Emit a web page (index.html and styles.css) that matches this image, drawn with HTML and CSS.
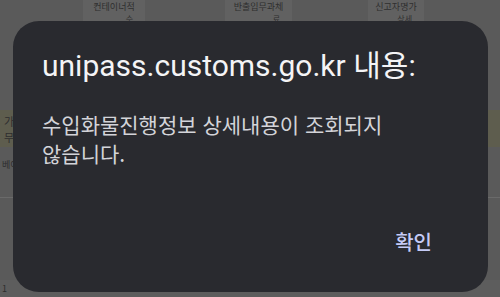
FILE: index.html
```html
<!DOCTYPE html>
<html lang="ko">
<head>
<meta charset="utf-8">
<title>unipass</title>
<link rel="stylesheet" href="styles.css">
</head>
<body>
<div class="page">
  <div class="head-row">
    <div class="hc c1"></div>
    <div class="hc c2 light"><span>컨테이너적</span><span class="sub">수</span></div>
    <div class="hc c3"></div>
    <div class="hc c4 light"><span>반출입무과체</span><span class="sub">료</span></div>
    <div class="hc c5"></div>
    <div class="hc c6 light"><span>신고자명가</span><span class="sub">상세</span></div>
    <div class="hc c7"></div>
  </div>
  <div class="body-rows">
    <div class="row r1"></div>
    <div class="row r2"><span>가</span><span>무</span></div>
    <div class="row r3"><span>베이</span></div>
    <div class="row r4"></div>
    <div class="row r5"></div>
    <div class="row r6"><span>1</span></div>
  </div>
</div>

<div class="dialog" role="dialog">
  <h1 class="title">unipass.customs.go.kr 내용:</h1>
  <p class="message">수입화물진행정보 상세내용이 조회되지<br>않습니다.</p>
  <div class="actions">
    <button class="ok">확인</button>
  </div>
</div>
</body>
</html>
```

FILE: styles.css
```css
html, body {
  margin: 0;
  padding: 0;
}
body {
  width: 500px;
  height: 297px;
  overflow: hidden;
  background: #5a5a5a;
  font-family: "Noto Sans CJK KR", "Noto Sans", sans-serif;
}

/* dimmed page behind the dialog */
.page {
  width: 500px;
  height: 297px;
  display: flex;
  flex-direction: column;
}
.head-row {
  display: flex;
  height: 30px;
  flex: none;
}
.hc {
  display: flex;
  flex-direction: column;
  align-items: center;
  font-size: 9px;
  line-height: 12px;
  color: #2f2f2f;
  background: #5a5a5a;
  padding-top: 1px;
}
.hc .sub {
  font-size: 8px;
  line-height: 11px;
  align-self: flex-end;
  padding-right: 12px;
}
.hc.light { background: #616161; }
.c1 { width: 83px; }
.c2 { width: 62px; }
.c3 { width: 80px; }
.c4 { width: 67px; }
.c5 { width: 76px; }
.c6 { width: 56px; }
.c7 { flex: 1; }

.body-rows {
  display: flex;
  flex-direction: column;
  flex: 1;
}
.row {
  font-size: 9px;
  color: #2e2e2e;
  padding-left: 2px;
  display: flex;
  flex-direction: column;
  justify-content: center;
}
.r1 { height: 80px; }
.r2 { height: 37px; background: #5e5d4e; font-size: 11px; line-height: 16px; padding-left: 4px; }
.r3 { height: 34px; }
.r4 { height: 16px; border-bottom: 1px solid #6a6a6a; }
.r5 { height: 82px; }
.r6 { flex: 1; background: #5d5d5d; }

/* alert dialog */
.dialog {
  position: fixed;
  left: 13px;
  top: 21px;
  width: 475px;
  height: 271px;
  box-sizing: border-box;
  padding: 27px 44px 38px 29px;
  background: #292a2f;
  border-radius: 26px;
  display: flex;
  flex-direction: column;
}
.title {
  margin: 0;
  font-family: Roboto, "Noto Sans CJK KR", sans-serif;
  font-weight: 400;
  font-size: 30px;
  line-height: 36px;
  color: #f4f4f6;
  white-space: nowrap;
}
.message {
  margin: 26px 0 0;
  font-size: 21px;
  line-height: 29px;
  color: #d3d4d9;
  white-space: nowrap;
}
.actions {
  margin-top: auto;
  display: flex;
  justify-content: flex-end;
}
.ok {
  border: 0;
  background: transparent;
  padding: 0 12px;
  height: 24px;
  font-family: "Noto Sans CJK KR", sans-serif;
  font-size: 20px;
  line-height: 24px;
  font-weight: 500;
  color: #c5cbf7;
}
```
